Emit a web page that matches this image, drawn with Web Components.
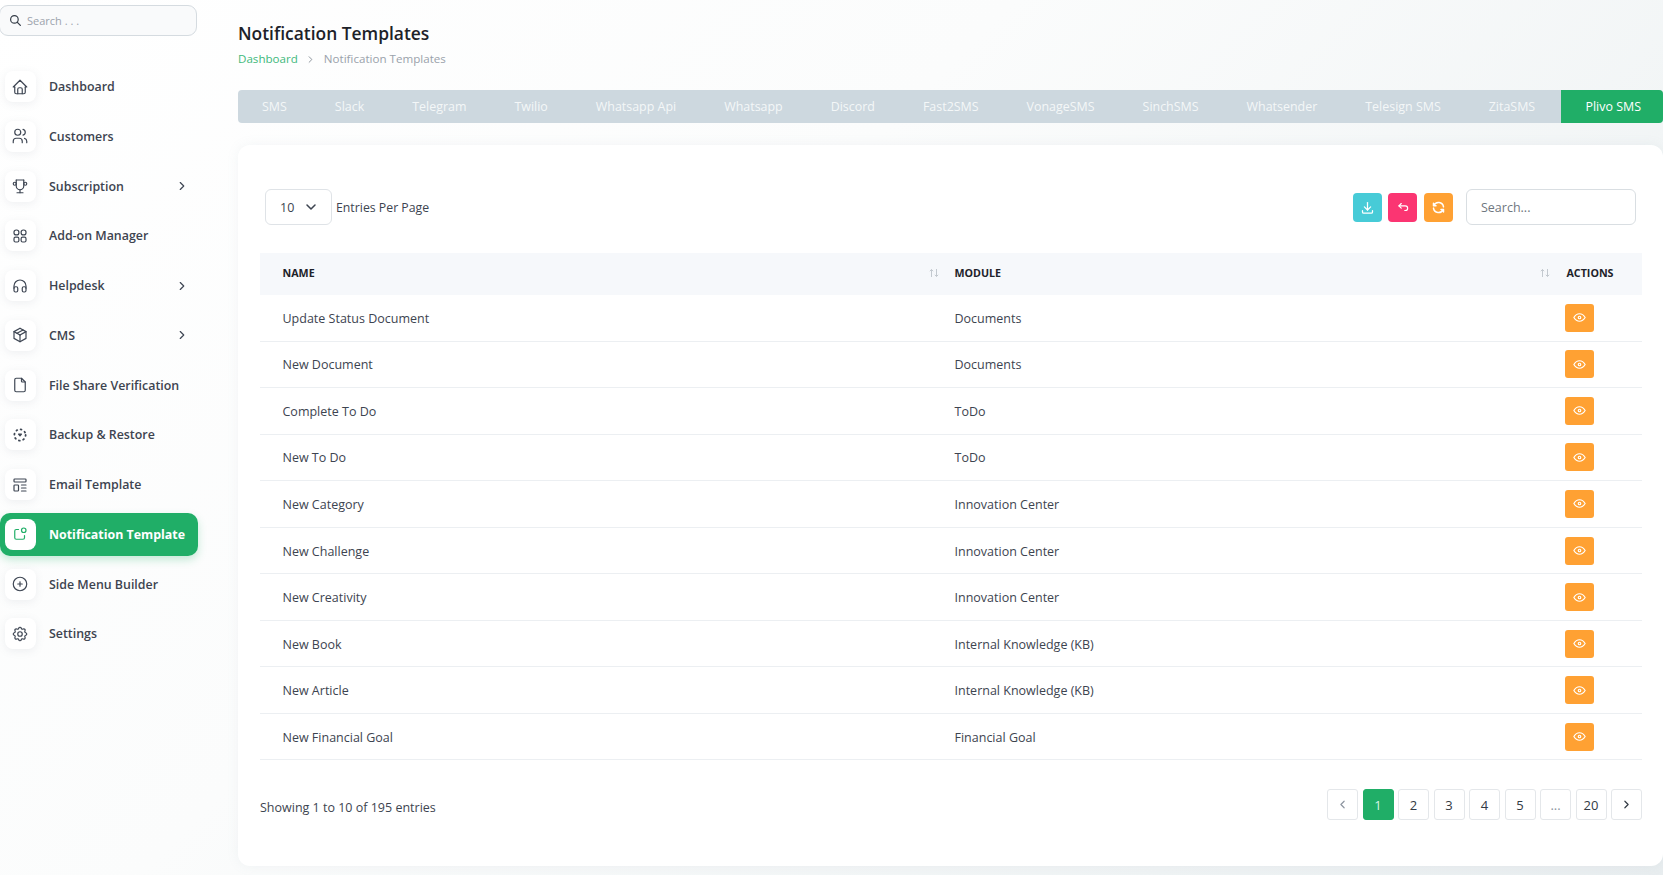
<!DOCTYPE html>
<html lang="en">
<head>
<meta charset="utf-8">
<title>Notification Templates</title>
<style>
  html, body { margin: 0; height: 100%; }
  body {
    width: 1663px;
    height: 875px;
    overflow: hidden;
    font-family: "Open Sans", "Liberation Sans", sans-serif;
    color: #3d4450;
    background: linear-gradient(135deg, #ffffff 0%, #fbfcfc 40%, #eff3f4 80%, #e8edef 100%);
  }
  app-shell { height: 875px; }
</style>
</head>
<body>
<app-shell>
  <side-nav slot="nav">
    <nav-item icon="home" label="Dashboard"></nav-item>
    <nav-item icon="users" label="Customers"></nav-item>
    <nav-item icon="trophy" label="Subscription" arrow></nav-item>
    <nav-item icon="apps" label="Add-on Manager"></nav-item>
    <nav-item icon="headphones" label="Helpdesk" arrow></nav-item>
    <nav-item icon="box" label="CMS" arrow></nav-item>
    <nav-item icon="file" label="File Share Verification"></nav-item>
    <nav-item icon="backup" label="Backup &amp; Restore"></nav-item>
    <nav-item icon="template" label="Email Template"></nav-item>
    <nav-item icon="notification" label="Notification Template" active></nav-item>
    <nav-item icon="plus" label="Side Menu Builder"></nav-item>
    <nav-item icon="settings" label="Settings"></nav-item>
  </side-nav>
  <page-header title="Notification Templates"></page-header>
  <tab-bar tabs="SMS|Slack|Telegram|Twilio|Whatsapp Api|Whatsapp|Discord|Fast2SMS|VonageSMS|SinchSMS|Whatsender|Telesign SMS|ZitaSMS|Plivo SMS" active="Plivo SMS"></tab-bar>
  <data-card>
    <data-row name="Update Status Document" module="Documents"></data-row>
    <data-row name="New Document" module="Documents"></data-row>
    <data-row name="Complete To Do" module="ToDo"></data-row>
    <data-row name="New To Do" module="ToDo"></data-row>
    <data-row name="New Category" module="Innovation Center"></data-row>
    <data-row name="New Challenge" module="Innovation Center"></data-row>
    <data-row name="New Creativity" module="Innovation Center"></data-row>
    <data-row name="New Book" module="Internal Knowledge (KB)"></data-row>
    <data-row name="New Article" module="Internal Knowledge (KB)"></data-row>
    <data-row name="New Financial Goal" module="Financial Goal"></data-row>
  </data-card>
</app-shell>

<script>
// Trazos de los iconos, en una caja de 24x24
const ICONS = {
  search: `<path d="M10 10m-7 0a7 7 0 1 0 14 0a7 7 0 1 0 -14 0"/><path d="M21 21l-6 -6"/>`,
  home: `<path d="M5 12l-2 0l9 -9l9 9l-2 0"/><path d="M5 12v7a2 2 0 0 0 2 2h10a2 2 0 0 0 2 -2v-7"/><path d="M9 21v-6a2 2 0 0 1 2 -2h2a2 2 0 0 1 2 2v6"/>`,
  users: `<path d="M9 7m-4 0a4 4 0 1 0 8 0a4 4 0 1 0 -8 0"/><path d="M3 21v-2a4 4 0 0 1 4 -4h4a4 4 0 0 1 4 4v2"/><path d="M16 3.13a4 4 0 0 1 0 7.75"/><path d="M21 21v-2a4 4 0 0 0 -3 -3.85"/>`,
  trophy: `<path d="M8 21l8 0"/><path d="M12 17l0 4"/><path d="M7 4l10 0"/><path d="M17 4v8a5 5 0 0 1 -10 0v-8"/><path d="M5 9m-2 0a2 2 0 1 0 4 0a2 2 0 1 0 -4 0"/><path d="M19 9m-2 0a2 2 0 1 0 4 0a2 2 0 1 0 -4 0"/>`,
  apps: `<rect x="4" y="4" width="6.5" height="6.5" rx="3"/><rect x="13.5" y="4" width="6.5" height="6.5" rx="3"/><rect x="4" y="13.5" width="6.5" height="6.5" rx="2"/><rect x="13.5" y="13.5" width="6.5" height="6.5" rx="2"/>`,
  headphones: `<path d="M4 15a2 2 0 0 1 2 -2h1a2 2 0 0 1 2 2v3a2 2 0 0 1 -2 2h-1a2 2 0 0 1 -2 -2z"/><path d="M15 15a2 2 0 0 1 2 -2h1a2 2 0 0 1 2 2v3a2 2 0 0 1 -2 2h-1a2 2 0 0 1 -2 -2z"/><path d="M4 15v-3a8 8 0 0 1 16 0v3"/>`,
  box: `<path d="M12 3l8 4.5l0 9l-8 4.5l-8 -4.5l0 -9l8 -4.5"/><path d="M12 12l8 -4.5"/><path d="M12 12l0 9"/><path d="M12 12l-8 -4.5"/><path d="M16 5.25l-8 4.5"/>`,
  file: `<path d="M14 3v4a1 1 0 0 0 1 1h4"/><path d="M17 21h-10a2 2 0 0 1 -2 -2v-14a2 2 0 0 1 2 -2h7l5 5v11a2 2 0 0 1 -2 2z"/>`,
  backup: `<circle cx="12" cy="12" r="7.5" stroke-dasharray="1.2 4.69" stroke-width="2.4"/><path d="M10 10.8h4l-2 2.4z"/>`,
  template: `<path d="M5 4h14a1 1 0 0 1 1 1v2a1 1 0 0 1 -1 1h-14a1 1 0 0 1 -1 -1v-2a1 1 0 0 1 1 -1z"/><path d="M5 12h4a1 1 0 0 1 1 1v6a1 1 0 0 1 -1 1h-4a1 1 0 0 1 -1 -1v-6a1 1 0 0 1 1 -1z"/><path d="M14 12l6 0"/><path d="M14 16l6 0"/><path d="M14 20l6 0"/>`,
  notification: `<path d="M10 6h-3a2 2 0 0 0 -2 2v9a2 2 0 0 0 2 2h9a2 2 0 0 0 2 -2v-3"/><path d="M14 7a3 3 0 1 0 6 0a3 3 0 1 0 -6 0"/>`,
  plus: `<path d="M3 12a9 9 0 1 0 18 0a9 9 0 0 0 -18 0"/><path d="M9 12h6"/><path d="M12 9v6"/>`,
  settings: `<path d="M10.325 4.317c.426 -1.756 2.924 -1.756 3.35 0a1.724 1.724 0 0 0 2.573 1.066c1.543 -.94 3.31 .826 2.37 2.37a1.724 1.724 0 0 0 1.065 2.572c1.756 .426 1.756 2.924 0 3.35a1.724 1.724 0 0 0 -1.066 2.573c.94 1.543 -.826 3.31 -2.37 2.37a1.724 1.724 0 0 0 -2.572 1.065c-.426 1.756 -2.924 1.756 -3.35 0a1.724 1.724 0 0 0 -2.573 -1.066c-1.543 .94 -3.31 -.826 -2.37 -2.37a1.724 1.724 0 0 0 -1.065 -2.572c-1.756 -.426 -1.756 -2.924 0 -3.35a1.724 1.724 0 0 0 1.066 -2.573c-.94 -1.543 .826 -3.31 2.37 -2.37c1 .608 2.296 .07 2.572 -1.065z"/><path d="M9 12a3 3 0 1 0 6 0a3 3 0 0 0 -6 0"/>`,
  eye: `<path d="M10 12a2 2 0 1 0 4 0a2 2 0 0 0 -4 0"/><path d="M21 12c-2.4 4 -5.4 6 -9 6c-3.6 0 -6.6 -2 -9 -6c2.4 -4 5.4 -6 9 -6c3.6 0 6.6 2 9 6"/>`,
  download: `<path d="M4 17v2a2 2 0 0 0 2 2h12a2 2 0 0 0 2 -2v-2"/><path d="M7 11l5 5l5 -5"/><path d="M12 4l0 12"/>`,
  back: `<path d="M9 14l-4 -4l4 -4"/><path d="M5 10h11a4 4 0 1 1 0 8h-1"/>`,
  refresh: `<path d="M20 11a8.1 8.1 0 0 0 -15.5 -2m-.5 -4v4h4"/><path d="M4 13a8.1 8.1 0 0 0 15.5 2m.5 4v-4h-4"/>`,
  right: `<path d="M9 6l6 6l-6 6"/>`,
  left: `<path d="M15 6l-6 6l6 6"/>`,
  down: `<path d="M6 9l6 6l6 -6"/>`,
};

const svg = (name, size, stroke = 2) => `<svg width="${size}" height="${size}" viewBox="0 0 24 24" fill="none" stroke="currentColor" stroke-width="${stroke}" stroke-linecap="round" stroke-linejoin="round">${ICONS[name]}</svg>`;

class AppShell extends HTMLElement {
  constructor() {
    super();
    this.attachShadow({ mode: "open" });
    this.shadowRoot.innerHTML = `
      <style>
        :host { display: grid; grid-template-columns: 238px 1425px; }
        .main { display: flex; flex-direction: column; min-width: 0; }
      </style>
      <slot name="nav"></slot>
      <div class="main"><slot></slot></div>
    `;
  }
}

class SideNav extends HTMLElement {
  constructor() {
    super();
    this.attachShadow({ mode: "open" });
    this.shadowRoot.innerHTML = `
      <style>
        :host { display: block; padding-top: 5px; }
        .search {
          box-sizing: border-box;
          display: flex;
          align-items: center;
          gap: 5px;
          width: 198px;
          height: 31px;
          margin-left: -1px;
          padding-left: 9px;
          border: 1px solid #d5dbe0;
          border-radius: 9px;
          background: #f9fafb;
          color: #9ca3ad;
          font-size: 11px;
        }
        .search svg { color: #333b46; }
        .items { display: flex; flex-direction: column; gap: 6.75px; margin-top: 29px; }
      </style>
      <div class="search">${svg("search", 13, 2.2)}<span>Search . . .</span></div>
      <div class="items"><slot></slot></div>
    `;
  }
}

class NavItem extends HTMLElement {
  constructor() {
    super();
    this.attachShadow({ mode: "open" });
    const arrow = this.hasAttribute("arrow") ? `<span class="arrow">${svg("right", 14, 2)}</span>` : "";
    this.shadowRoot.innerHTML = `
      <style>
        :host {
          display: block;
          width: 198px;
          height: 43px;
        }
        .item {
          box-sizing: border-box;
          display: flex;
          align-items: center;
          height: 100%;
          padding-left: 4.5px;
          border-radius: 0 10px 10px 0;
          color: #3d4450;
          font-size: 12.4px;
          font-weight: 600;
        }
        .icon {
          flex: none;
          display: flex;
          align-items: center;
          justify-content: center;
          width: 31px;
          height: 31px;
          margin-right: 13.5px;
          border-radius: 8px;
          background: #fff;
          box-shadow: 0 2px 8px rgba(120, 135, 150, 0.12);
          color: #3f4754;
        }
        .arrow { display: flex; margin-left: auto; margin-right: 9px; color: #3f4754; }
        :host([active]) .item {
          border-radius: 10px;
          background: #20ae67;
          box-shadow: 0 4px 8px rgba(32, 174, 103, 0.25);
          color: #fff;
          font-weight: 700;
        }
        :host([active]) .icon { color: #20ae67; box-shadow: none; }
      </style>
      <div class="item">
        <span class="icon">${svg(this.getAttribute("icon"), 18, 1.6)}</span>
        <span>${this.getAttribute("label").replace("&", "&amp;")}</span>
        ${arrow}
      </div>
    `;
  }
}

class PageHeader extends HTMLElement {
  constructor() {
    super();
    this.attachShadow({ mode: "open" });
    const title = this.getAttribute("title");
    this.shadowRoot.innerHTML = `
      <style>
        :host { display: block; padding-top: 21px; height: 69px; }
        h1 { margin: 0; font-size: 17.4px; line-height: 25px; font-weight: 600; color: #1d2229; }
        .crumbs { display: flex; align-items: center; margin-top: 4px; font-size: 11.6px; line-height: 18px; color: #9aa2ab; }
        a { color: #3fb97c; }
        svg { margin: 0 8px 0 7px; color: #848c95; }
      </style>
      <h1>${title}</h1>
      <div class="crumbs"><a>Dashboard</a>${svg("right", 11, 2)}<span>${title}</span></div>
    `;
  }
}

class TabBar extends HTMLElement {
  constructor() {
    super();
    this.attachShadow({ mode: "open" });
    const active = this.getAttribute("active");
    const tabs = this.getAttribute("tabs").split("|")
      .map((tab) => `<span class="tab${tab === active ? " on" : ""}">${tab}</span>`).join("");
    this.shadowRoot.innerHTML = `
      <style>
        :host {
          display: flex;
          height: 33px;
          border-radius: 4px;
          background: #cdd8df;
          font-size: 12.45px;
          color: #f4f7f8;
          overflow: hidden;
        }
        .tab { padding: 0 24px; line-height: 33px; white-space: nowrap; }
        .on { margin-left: auto; padding: 0 22px 0 24.5px; background: #20ae67; color: #fff; }
      </style>
      ${tabs}
    `;
  }
}

class DataCard extends HTMLElement {
  constructor() {
    super();
    this.attachShadow({ mode: "open" });
    const sort = `<svg class="sort" width="10" height="10" viewBox="0 0 10 10" fill="none" stroke="#c3c9cf" stroke-width="1"><path d="M2.5 9V1.5M.8 3.2 2.5 1.5l1.7 1.7"/><path d="M7.5 1v7.5M5.8 6.8l1.7 1.7 1.7-1.7"/></svg>`;
    this.shadowRoot.innerHTML = `
      <style>
        :host {
          display: block;
          box-sizing: border-box;
          height: 721px;
          margin-top: 22px;
          padding: 44px 21px 0 22px;
          border-radius: 12px;
          background: #fff;
          box-shadow: 0 0 12px rgba(150, 165, 175, 0.1);
          font-size: 12.5px;
          color: #3d4450;
        }
        .tools { display: flex; align-items: center; height: 36px; padding-left: 5px; padding-right: 6px; }
        .select {
          box-sizing: border-box;
          display: flex;
          align-items: center;
          justify-content: space-between;
          width: 67px;
          height: 36px;
          padding: 0 12px 0 14px;
          border: 1px solid #dfe3e7;
          border-radius: 6px;
          margin-right: 4px;
        }
        .entries { font-size: 12.3px; }
        .spacer { flex: 1; }
        .tool {
          display: flex;
          align-items: center;
          justify-content: center;
          width: 29px;
          height: 29px;
          margin-right: 6.5px;
          border-radius: 4px;
          color: #fff;
        }
        .find {
          box-sizing: border-box;
          width: 170px;
          height: 36px;
          margin-left: 7px;
          padding: 1px 14px 0;
          border: 1px solid #d9dee2;
          border-radius: 6px;
          color: #6f7780;
          line-height: 34px;
        }
        .head {
          display: grid;
          grid-template-columns: 684px 611px 87px;
          align-items: center;
          height: 42px;
          box-sizing: border-box;
          padding-bottom: 3px;
          margin-top: 28px;
          background: #f6f8fb;
          color: #1d2229;
          font-size: 10.7px;
          font-weight: 700;
        }
        .head div { display: flex; align-items: center; justify-content: space-between; }
        .head div:nth-child(1) { padding-left: 22.5px; padding-right: 5px; }
        .head div:nth-child(2) { padding-left: 10.5px; padding-right: 5px; }
        .head div:nth-child(3) { padding-left: 11.5px; }
        .foot { display: flex; align-items: center; justify-content: space-between; margin-top: 29px; }
        .foot span { margin-top: 5px; }
        .pages { display: flex; gap: 4.5px; }
      </style>
      <div class="tools">
        <div class="select"><span>10</span>${svg("down", 16, 2.3)}</div>
        <span class="entries">Entries Per Page</span>
        <div class="spacer"></div>
        <div class="tool" style="background:#47cbd7">${svg("download", 15, 2)}</div>
        <div class="tool" style="background:#fb3572">${svg("back", 14, 2)}</div>
        <div class="tool" style="background:#ffa133">${svg("refresh", 15, 2.4)}</div>
        <div class="find">Search...</div>
      </div>
      <div class="head">
        <div>NAME${sort}</div>
        <div>MODULE${sort}</div>
        <div>ACTIONS</div>
      </div>
      <slot></slot>
      <div class="foot">
        <span>Showing 1 to 10 of 195 entries</span>
        <div class="pages">
          <page-btn icon="left" muted></page-btn>
          <page-btn active>1</page-btn>
          <page-btn>2</page-btn>
          <page-btn>3</page-btn>
          <page-btn>4</page-btn>
          <page-btn>5</page-btn>
          <page-btn muted>...</page-btn>
          <page-btn>20</page-btn>
          <page-btn icon="right"></page-btn>
        </div>
      </div>
    `;
  }
}

class DataRow extends HTMLElement {
  constructor() {
    super();
    this.attachShadow({ mode: "open" });
    this.shadowRoot.innerHTML = `
      <style>
        :host {
          display: grid;
          grid-template-columns: 684px 611px 87px;
          align-items: center;
          height: 46.55px;
          box-sizing: border-box;
          border-bottom: 1px solid #eceff2;
        }
        .name { padding: 1px 0 0 22.5px; }
        .module { padding: 1px 0 0 10.5px; }
        .eye {
          display: flex;
          align-items: center;
          justify-content: center;
          width: 29px;
          height: 28px;
          margin-left: 10px;
          border-radius: 3px;
          background: #ffa133;
          color: #fff;
        }
      </style>
      <div class="name">${this.getAttribute("name")}</div>
      <div class="module">${this.getAttribute("module")}</div>
      <div><div class="eye">${svg("eye", 15, 1.9)}</div></div>
    `;
  }
}

class PageBtn extends HTMLElement {
  constructor() {
    super();
    this.attachShadow({ mode: "open" });
    const icon = this.getAttribute("icon");
    this.shadowRoot.innerHTML = `
      <style>
        :host {
          box-sizing: border-box;
          display: flex;
          align-items: center;
          justify-content: center;
          width: 31px;
          height: 31px;
          border: 1px solid #e4e7ea;
          border-radius: 3px;
          background: #fff;
          font-size: 13px;
          color: #333a44;
        }
        :host([muted]) { color: #8d95a0; }
        :host([active]) { border-color: #20ae67; background: #20ae67; color: #d9f5e6; }
      </style>
      ${icon ? svg(icon, 13, 2.2) : "<slot></slot>"}
    `;
  }
}

customElements.define("app-shell", AppShell);
customElements.define("side-nav", SideNav);
customElements.define("nav-item", NavItem);
customElements.define("page-header", PageHeader);
customElements.define("tab-bar", TabBar);
customElements.define("data-card", DataCard);
customElements.define("data-row", DataRow);
customElements.define("page-btn", PageBtn);
</script>
</body>
</html>
